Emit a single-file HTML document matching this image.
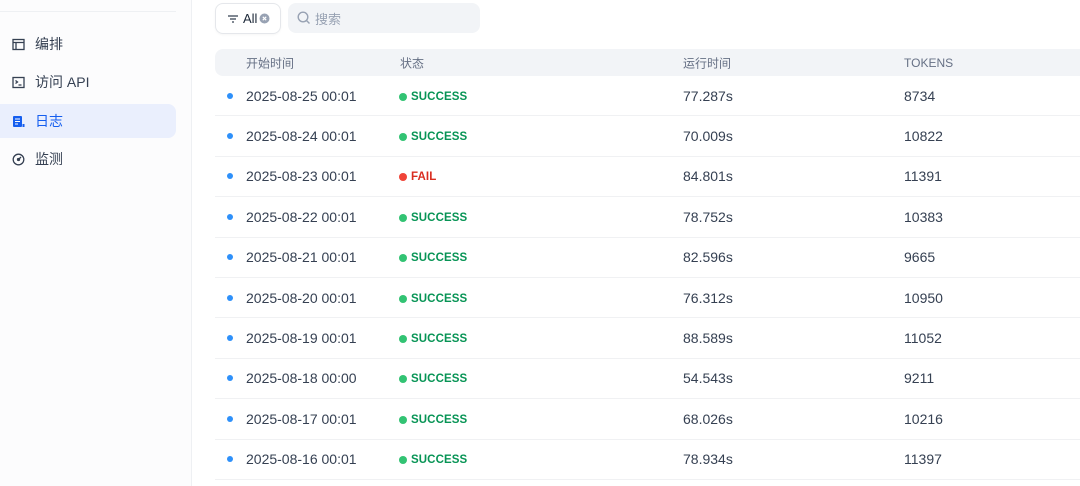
<!DOCTYPE html>
<html><head><meta charset="utf-8"><style>
*{box-sizing:border-box;margin:0;padding:0}
body{width:1080px;height:486px;overflow:hidden;background:#fff;font-family:"Liberation Sans","Noto Sans CJK SC",sans-serif;position:relative;color:#354052}
.side{position:absolute;left:0;top:0;width:192px;height:486px;background:#fcfcfd;border-right:1px solid #eef0f3}
.topline{position:absolute;left:0;top:11px;width:176px;height:1px;background:#eef0f3}
.item{position:absolute;left:0;width:176px;height:34px;display:flex;align-items:center;padding-left:12px;font-size:14px;color:#354052}
.item svg{margin-right:10px}
.item.act{background:#eaeffd;color:#155eef;border-radius:0 8px 8px 0}
.filter{position:absolute;left:215px;top:3px;width:66px;height:31px;border:1px solid #e5e7eb;border-radius:8px;display:flex;align-items:center;padding-left:11px;font-size:13px;color:#1d2939;box-shadow:0 1px 2px rgba(0,0,0,.04)}
.search{position:absolute;left:288px;top:3px;width:192px;height:30px;background:#f2f4f7;border-radius:8px;display:flex;align-items:center;padding-left:9px;font-size:13px;color:#98a2b3}
.head{position:absolute;left:215px;top:49px;width:880px;height:27px;background:#f2f4f7;border-radius:8px;font-size:12px;color:#667085}
.head span,.row span{position:absolute;top:50%;transform:translateY(-50%)}
.row{position:absolute;left:215px;width:865px;height:40.4px;border-bottom:1px solid #f0f1f3;font-size:14px;color:#354052}
.bd{left:12px;width:6px;height:6px;border-radius:50%;background:#2e90fa}
.row span.st{font-size:11.5px;font-weight:bold;letter-spacing:.1px;display:flex;align-items:center;top:calc(50% + 1px)}
.st i{display:inline-block;width:8px;height:8px;border-radius:50%;margin-right:4px}
.ok{color:#079455}.ok i{background:#32c373}
.fl{color:#d92d20}.fl i{background:#f04438}
</style></head><body>
<div class="side">
<div class="topline"></div>
<div class="item" style="top:27px"><svg width="13" height="13" viewBox="0 0 13 13" fill="none" stroke="#354052" stroke-width="1.3"><rect x="1" y="1.5" width="11" height="10"/><path d="M1 4.5h11M4 4.5v7"/></svg>编排</div>
<div class="item" style="top:65px"><svg width="13" height="13" viewBox="0 0 13 13" fill="none" stroke="#354052" stroke-width="1.3"><rect x="1" y="1.5" width="11" height="10"/><path d="M3.5 4.5l2 1.5-2 1.5M6.5 9h3"/></svg>访问 API</div>
<div class="item act" style="top:104px"><svg width="13" height="13" viewBox="0 0 13 13"><rect x="1" y="1" width="9" height="11" rx="1" fill="#155eef"/><path d="M3 4h5M3 6.5h5M3 9h3" stroke="#fff" stroke-width="1.1"/><rect x="10.5" y="9" width="2" height="3" fill="#155eef"/></svg>日志</div>
<div class="item" style="top:142px"><svg width="13" height="13" viewBox="0 0 13 13" fill="none" stroke="#354052" stroke-width="1.3"><circle cx="6.5" cy="6.5" r="5.3"/><path d="M6.5 6.5l2.5-2.5"/><circle cx="6.5" cy="6.5" r="1" fill="#354052"/></svg>监测</div>
</div>
<div class="filter"><svg width="12" height="10" viewBox="0 0 12 10" stroke="#354052" stroke-width="1.3"><path d="M1 2h10M3 5h6M5 8h2"/></svg><span style="margin-left:4px">All</span><svg style="margin-left:2px" width="11" height="11" viewBox="0 0 11 11"><circle cx="5.5" cy="5.5" r="5" fill="#98a2b3"/><path d="M3.8 3.8l3.4 3.4M7.2 3.8l-3.4 3.4" stroke="#fff" stroke-width="1.2"/></svg></div>
<div class="search"><svg width="14" height="14" viewBox="0 0 14 14" fill="none" stroke="#98a2b3" stroke-width="1.4"><circle cx="6" cy="6" r="4.8"/><path d="M9.5 9.5l3 3"/></svg><span style="margin-left:4px">搜索</span></div>
<div class="head"><span style="left:31px">开始时间</span><span style="left:185px">状态</span><span style="left:468px">运行时间</span><span style="left:689px">TOKENS</span></div>
<div id="rows"></div>
<script>
var d=[["2025-08-25 00:01",1,"77.287s","8734"],["2025-08-24 00:01",1,"70.009s","10822"],["2025-08-23 00:01",0,"84.801s","11391"],["2025-08-22 00:01",1,"78.752s","10383"],["2025-08-21 00:01",1,"82.596s","9665"],["2025-08-20 00:01",1,"76.312s","10950"],["2025-08-19 00:01",1,"88.589s","11052"],["2025-08-18 00:00",1,"54.543s","9211"],["2025-08-17 00:01",1,"68.026s","10216"],["2025-08-16 00:01",1,"78.934s","11397"]];
var h="";d.forEach(function(r,i){var t=76+i*40.4;h+='<div class="row" style="top:'+t+'px"><span class="bd"></span><span style="left:31px">'+r[0]+'</span><span class="st '+(r[1]?'ok':'fl')+'" style="left:184px"><i></i>'+(r[1]?'SUCCESS':'FAIL')+'</span><span style="left:468px">'+r[2]+'</span><span style="left:689px">'+r[3]+'</span></div>'});
document.getElementById("rows").innerHTML=h;
</script>
</body></html>
